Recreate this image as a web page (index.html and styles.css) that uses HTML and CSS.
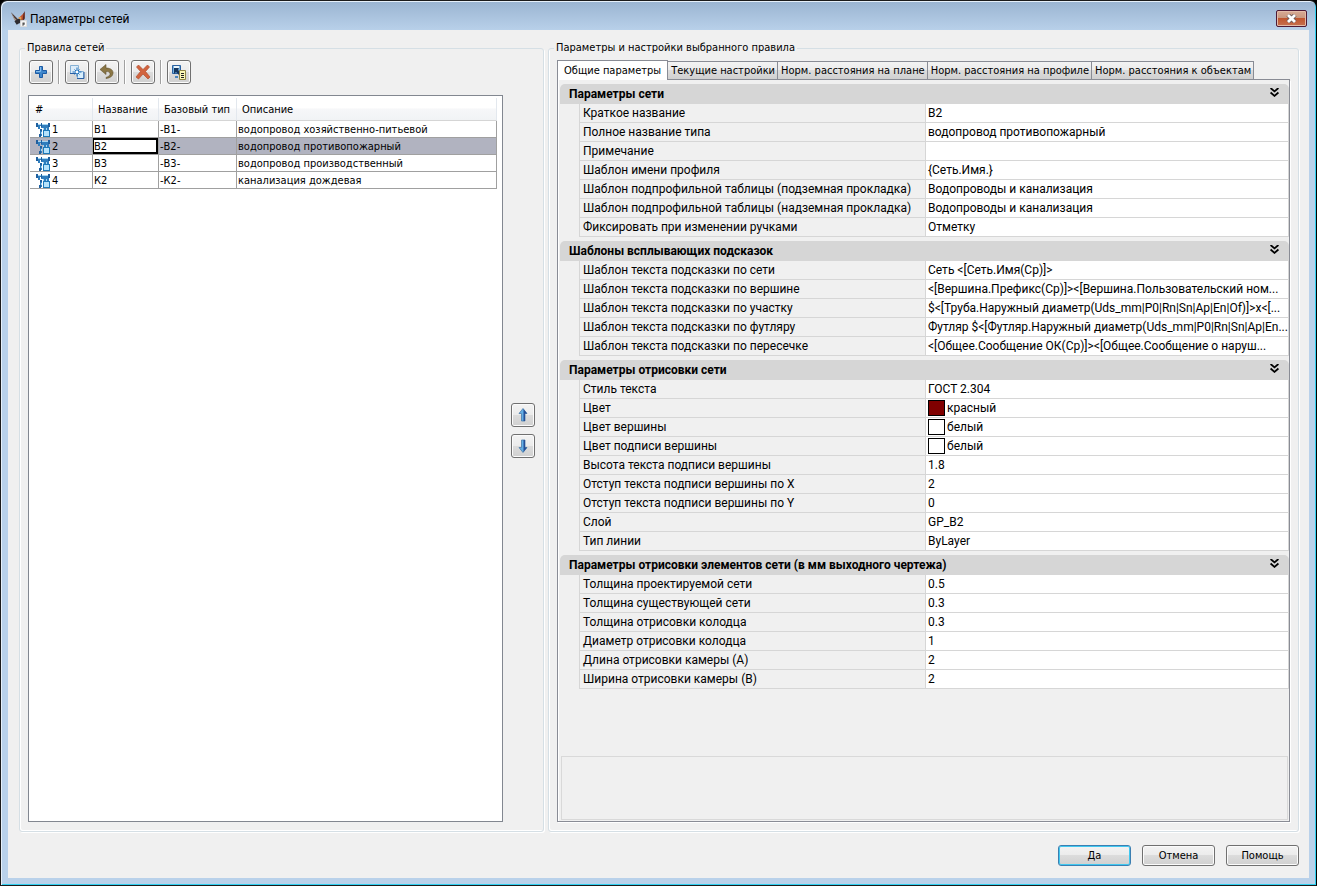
FILE: index.html
```html
<!DOCTYPE html>
<html lang="ru">
<head>
    <meta charset="UTF-8">
    <meta name="viewport" content="width=device-width, initial-scale=1.0">
    <title>Параметры сетей</title>
    <link rel="stylesheet" href="styles.css">
</head>
<body>
    <!-- Shared symbols -->
    <svg class="symbols" aria-hidden="true">
        <symbol id="net" viewBox="0 0 14 14">
            <path d="M0 2H13M5 4H12V7M3 3V6M5 7V13M9 4V8" stroke="#2f7dbd" stroke-width="2" fill="none"/>
            <path d="M0 0h2v4H0zM5 0h1v4H5zM12 0h2v4h-2zM4 6h2v2H4zM3 11h2v3H3z" fill="#1f5f9e"/>
            <path d="M2 1h3v1H2zM6 1h6v1H6zM7 5h1v2H7zM10 5h1v2h-1zM5 9h1v2H5z" fill="#a5d6f3"/>
            <rect x="7.5" y="7.5" width="6" height="6" fill="#b5e2fb" stroke="#1d79b9"/>
        </symbol>
        <symbol id="chevrons" viewBox="0 0 8 8">
            <path d="M0.500 0L4 3L7.500 0M0.500 4L4 7L7.500 4" stroke="#000" stroke-width="1.600" fill="none"/>
        </symbol>
    </svg>

    <div class="window">
        <header class="titlebar">
            <svg class="app-icon" width="16" height="16" viewBox="0 0 14 14">
                <path d="M0 1L6 7L8 11L4 9z" fill="#4b3a36"/>
                <path d="M0 1L3 6L6 9L3 8z" fill="#a8978b"/>
                <path d="M7 6L12 1V6L8 10z" fill="#c2502d"/>
                <path d="M11 2L12 0V7L10 9z" fill="#5b2b22"/>
                <path d="M3 9L8 6L10 9L5 12z" fill="#2e2c30"/>
                <path d="M6 6L9 5L9 8z" fill="#e2a352"/>
                <rect x="8.500" y="8.500" width="5" height="5" fill="#fff" stroke="#ddd"/>
                <path d="M10 10h2v2h-1v1h-1z" fill="#555"/>
            </svg>
            <h1>Параметры сетей</h1>
            <button class="close" type="button" aria-label="Закрыть">
                <svg width="11" height="9" viewBox="0 0 11 9">
                    <path d="M2 1L9 8M9 1L2 8" stroke="#6b5a5a" stroke-width="4.500"/>
                    <path d="M2 1L9 8M9 1L2 8" stroke="#fff" stroke-width="2.800"/>
                </svg>
            </button>
        </header>

        <main class="client">
            <div class="groups">
                <fieldset class="group">
                    <legend>Правила сетей</legend>
                    <div class="rules">
                        <div class="rules-main">
                            <div class="toolbar">
                                <button class="tool" type="button" aria-label="Добавить">
                                    <svg width="16" height="16" viewBox="0 0 16 16">
                                        <path d="M6.500 2.500h3v4h4v3h-4v4h-3v-4h-4v-3h4z" fill="#3f87cc" stroke="#1c5ba4"/>
                                        <path d="M7.500 3v4.500H3" stroke="#85bdec" fill="none"/>
                                    </svg>
                                </button>
                                <span class="sep"></span>
                                <button class="tool" type="button" aria-label="Копировать">
                                    <svg width="16" height="16" viewBox="0 0 16 16">
                                        <path d="M1.500 1.500h8v8h-8z" fill="#dcecf9" stroke="#86b1d5"/>
                                        <path d="M8.500 7.500h6v7h-6z" fill="#d8eefc" stroke="#86b1d5"/>
                                        <path d="M1 9.500h6M8 14.500h7V8" stroke="#2a5fa5" fill="none"/>
                                        <path d="M8 3.500v9M3.500 8h9M5.500 5.500l5 5M10.500 5.500l-5 5" stroke="#1f6fba"/>
                                        <rect x="7" y="7" width="2" height="2" fill="#fff"/>
                                    </svg>
                                </button>
                                <button class="tool" type="button" aria-label="Отменить">
                                    <svg width="16" height="16" viewBox="0 0 16 16">
                                        <path d="M1 5.500L7 0.500V4C12 4 14.500 6.500 14 9.500C13.500 12.500 11 14 7 14.500V13.500C10 12.500 11.500 11 11 9.500C10.500 7.800 9 7.500 7 7.500V10.500z" fill="#8a7645" stroke="#62532f" stroke-width="0.600"/>
                                    </svg>
                                </button>
                                <span class="sep"></span>
                                <button class="tool" type="button" aria-label="Удалить">
                                    <svg width="16" height="16" viewBox="0 0 16 16">
                                        <path d="M1.500 3L3.500 1L8 5.500L12.500 1L14.500 3L10.500 7.500L15 13L13 15L8 10L3.500 15L1 13L5.500 7.500z" fill="#d2643f" stroke="#b04f30" stroke-width="0.700"/>
                                    </svg>
                                </button>
                                <span class="sep"></span>
                                <button class="tool" type="button" aria-label="Импорт">
                                    <svg width="16" height="16" viewBox="0 0 16 16">
                                        <path d="M1.500 1.500h8v8h-8z" fill="#78b4e2" stroke="#2b61a0"/>
                                        <path d="M3 2h5v3H3z" fill="#e8f4fc"/>
                                        <path d="M3 4L8 4L7 6L11 10L9 12L5 8L3 10z" fill="#14365f"/>
                                        <path d="M4 12h3v2H4z" fill="#4a86bd"/>
                                        <path d="M8.500 6.500h6v9h-6z" fill="#fbf8b6" stroke="#8f8646"/>
                                        <path d="M10 9.500h3M10 11.500h3M10 13.500h3" stroke="#222"/>
                                    </svg>
                                </button>
                            </div>

                            <div class="list">
                                <table class="rules-table">
                                    <colgroup>
                                        <col class="col-num"><col class="col-name"><col class="col-type"><col>
                                    </colgroup>
                                    <thead>
                                        <tr><th>#</th><th>Название</th><th>Базовый тип</th><th>Описание</th></tr>
                                    </thead>
                                    <tbody>
                                        <tr>
                                            <td><svg class="net"><use href="#net"/></svg>1</td>
                                            <td>В1</td><td>-В1-</td><td>водопровод хозяйственно-питьевой</td>
                                        </tr>
                                        <tr class="selected">
                                            <td><svg class="net"><use href="#net"/></svg>2</td>
                                            <td class="editing"><input type="text" value="В2" aria-label="Название"></td>
                                            <td>-В2-</td><td>водопровод противопожарный</td>
                                        </tr>
                                        <tr>
                                            <td><svg class="net"><use href="#net"/></svg>3</td>
                                            <td>В3</td><td>-В3-</td><td>водопровод производственный</td>
                                        </tr>
                                        <tr>
                                            <td><svg class="net"><use href="#net"/></svg>4</td>
                                            <td>К2</td><td>-К2-</td><td>канализация дождевая</td>
                                        </tr>
                                    </tbody>
                                </table>
                            </div>
                        </div>

                        <div class="order">
                            <button class="tool" type="button" aria-label="Вверх">
                                <svg width="16" height="16" viewBox="0 0 16 16">
                                    <path d="M8 1.500L12 6.500H10V14H6.500V6.500H4z" fill="#62aee6" stroke="#4b7ba8" stroke-width="0.800"/>
                                    <path d="M8.500 2L12 6.500H10V14H8.500z" fill="#254f96"/>
                                </svg>
                            </button>
                            <button class="tool" type="button" aria-label="Вниз">
                                <svg width="16" height="16" viewBox="0 0 16 16">
                                    <path d="M8 14.500L12 9.500H10V2H6.500V9.500H4z" fill="#62aee6" stroke="#4b7ba8" stroke-width="0.800"/>
                                    <path d="M8.500 14L12 9.500H10V2H8.500z" fill="#254f96"/>
                                </svg>
                            </button>
                        </div>
                    </div>
                </fieldset>

                <fieldset class="group">
                    <legend>Параметры и настройки выбранного правила</legend>
                    <div class="settings">
                        <div class="tabs" role="tablist">
                            <button class="tab active" type="button" role="tab" aria-selected="true">Общие параметры</button>
                            <button class="tab" type="button" role="tab">Текущие настройки</button>
                            <button class="tab" type="button" role="tab">Норм. расстояния на плане</button>
                            <button class="tab" type="button" role="tab">Норм. расстояния на профиле</button>
                            <button class="tab" type="button" role="tab">Норм. расстояния к объектам</button>
                            <span class="tabs-rest"></span>
                        </div>

                        <div class="panel">
                            <section class="props">
                                <h2>Параметры сети <button type="button" aria-label="Свернуть"><svg><use href="#chevrons"/></svg></button></h2>
                                <table>
                                    <tr><th>Краткое название</th><td>В2</td></tr>
                                    <tr><th>Полное название типа</th><td>водопровод противопожарный</td></tr>
                                    <tr><th>Примечание</th><td></td></tr>
                                    <tr><th>Шаблон имени профиля</th><td>{Сеть.Имя.}</td></tr>
                                    <tr><th>Шаблон подпрофильной таблицы (подземная прокладка)</th><td>Водопроводы и канализация</td></tr>
                                    <tr><th>Шаблон подпрофильной таблицы (надземная прокладка)</th><td>Водопроводы и канализация</td></tr>
                                    <tr><th>Фиксировать при изменении ручками</th><td>Отметку</td></tr>
                                </table>
                            </section>

                            <section class="props">
                                <h2>Шаблоны всплывающих подсказок <button type="button" aria-label="Свернуть"><svg><use href="#chevrons"/></svg></button></h2>
                                <table>
                                    <tr><th>Шаблон текста подсказки по сети</th><td>Сеть &lt;[Сеть.Имя(Ср)]&gt;</td></tr>
                                    <tr><th>Шаблон текста подсказки по вершине</th><td>&lt;[Вершина.Префикс(Ср)]&gt;&lt;[Вершина.Пользовательский ном...</td></tr>
                                    <tr><th>Шаблон текста подсказки по участку</th><td>$&lt;[Труба.Наружный диаметр(Uds_mm|P0|Rn|Sn|Ap|En|Of)]&gt;x&lt;[...</td></tr>
                                    <tr><th>Шаблон текста подсказки по футляру</th><td>Футляр $&lt;[Футляр.Наружный диаметр(Uds_mm|P0|Rn|Sn|Ap|En...</td></tr>
                                    <tr><th>Шаблон текста подсказки по пересечке</th><td>&lt;[Общее.Сообщение ОК(Ср)]&gt;&lt;[Общее.Сообщение о наруш...</td></tr>
                                </table>
                            </section>

                            <section class="props">
                                <h2>Параметры отрисовки сети <button type="button" aria-label="Свернуть"><svg><use href="#chevrons"/></svg></button></h2>
                                <table>
                                    <tr><th>Стиль текста</th><td>ГОСТ 2.304</td></tr>
                                    <tr><th>Цвет</th><td><span class="swatch red"></span>красный</td></tr>
                                    <tr><th>Цвет вершины</th><td><span class="swatch"></span>белый</td></tr>
                                    <tr><th>Цвет подписи вершины</th><td><span class="swatch"></span>белый</td></tr>
                                    <tr><th>Высота текста подписи вершины</th><td>1.8</td></tr>
                                    <tr><th>Отступ текста подписи вершины по X</th><td>2</td></tr>
                                    <tr><th>Отступ текста подписи вершины по Y</th><td>0</td></tr>
                                    <tr><th>Слой</th><td>GP_В2</td></tr>
                                    <tr><th>Тип линии</th><td>ByLayer</td></tr>
                                </table>
                            </section>

                            <section class="props">
                                <h2>Параметры отрисовки элементов сети (в мм выходного чертежа) <button type="button" aria-label="Свернуть"><svg><use href="#chevrons"/></svg></button></h2>
                                <table>
                                    <tr><th>Толщина проектируемой сети</th><td>0.5</td></tr>
                                    <tr><th>Толщина существующей сети</th><td>0.3</td></tr>
                                    <tr><th>Толщина отрисовки колодца</th><td>0.3</td></tr>
                                    <tr><th>Диаметр отрисовки колодца</th><td>1</td></tr>
                                    <tr><th>Длина отрисовки камеры (А)</th><td>2</td></tr>
                                    <tr><th>Ширина отрисовки камеры (В)</th><td>2</td></tr>
                                </table>
                            </section>

                            <div class="hint"></div>
                        </div>
                    </div>
                </fieldset>
            </div>

            <footer class="actions">
                <button class="btn default" type="button">Да</button>
                <button class="btn" type="button">Отмена</button>
                <button class="btn" type="button">Помощь</button>
            </footer>
        </main>
    </div>
</body>
</html>
```

FILE: styles.css
```css
* {
    box-sizing: border-box;
}
body {
    margin: 0;
    background: #000;
    color: #000;
    font-family: "DejaVu Sans Condensed", "Noto Sans", sans-serif;
    font-size: 11px;
    line-height: 16px;
}
button,
input {
    font: inherit;
    color: inherit;
}
.symbols {
    display: none;
}

/* Window frame */
.window {
    display: flex;
    flex-direction: column;
    min-height: 100vh;
    padding: 0 7px 7px 6px;
    border: 1px solid #1b1b1b;
    border-right-color: #000;
    border-radius: 7px 7px 0 0;
    background: linear-gradient(#9ab4d1, #b9d1ea 30px, #b9d1ea);
    box-shadow: inset 1px 1px #e6f0fa, inset -1px -1px #2fd0f0;
}
.titlebar {
    display: flex;
    align-items: center;
    height: 29px;
    padding: 6px 2px 0 4px;
}
.app-icon {
    margin-right: 3px;
}
.titlebar h1 {
    flex: 1;
    margin: 0;
    font-family: Roboto, "Noto Sans", sans-serif;
    font-size: 12px;
    font-weight: normal;
}
.close {
    display: flex;
    align-items: center;
    justify-content: center;
    width: 31px;
    height: 17px;
    padding: 0;
    border: 1px solid #4e1a35;
    border-radius: 2px;
    background: linear-gradient(#d8ab94, #c99880 45%, #c0562f 50%, #c67150);
    box-shadow: inset 0 0 0 1px #e3bba8;
}

/* Client area */
.client {
    flex: 1;
    display: flex;
    flex-direction: column;
    margin-left: 1px;
    padding: 10px 10px 12px 11px;
    background: #f0f0f0;
}
.groups {
    flex: 1;
    display: grid;
    grid-template-columns: 525px 1fr;
    gap: 4px;
}
.group {
    display: flex;
    min-width: 0;
    margin: 0;
    padding: 4px 8px 9px;
    border: 1px solid #d5dfe5;
    border-radius: 3px;
    box-shadow: inset 1px -1px #fff, 1px 1px #fff;
}
.group legend {
    padding: 0 2px;
    margin-left: -3px;
}

/* Rules list */
.rules {
    flex: 1;
    display: flex;
    gap: 8px;
}
.rules-main {
    flex: 1;
    display: flex;
    flex-direction: column;
}
.toolbar {
    display: flex;
    gap: 6px;
    margin-bottom: 11px;
    padding-left: 1px;
}
.tool {
    display: flex;
    align-items: center;
    justify-content: center;
    width: 24px;
    height: 24px;
    padding: 0;
    border: 1px solid #707070;
    border-radius: 3px;
    background: linear-gradient(#f3f3f3, #ebebeb 50%, #dcdcdc 50%, #d0d0d0);
    box-shadow: inset 0 0 0 1px #fbfbfb;
}
.sep {
    width: 2px;
    margin: 0 -1px;
    border-left: 1px solid #a0a0a0;
    border-right: 1px solid #fff;
}
.list {
    flex: 1;
    padding: 2px 5px 0 1px;
    border: 1px solid #828790;
    background: #fff;
}
.rules-table {
    width: 100%;
    table-layout: fixed;
    border-collapse: separate;
    border-spacing: 0;
}
.col-num {
    width: 63px;
}
.col-name {
    width: 66px;
}
.col-type {
    width: 78px;
}
.rules-table th {
    height: 23px;
    padding: 2px 0 0 5px;
    border-right: 1px solid #e3e8ee;
    border-bottom: 1px solid #d5d5d5;
    background: linear-gradient(#fff 45%, #f6f7f9 50%, #f1f3f5);
    font-weight: normal;
    text-align: left;
}
.rules-table td {
    height: 17px;
    padding: 2px 0 0 1px;
    border-right: 1px solid #a0a0a0;
    border-bottom: 1px solid #a0a0a0;
    line-height: 14px;
    white-space: nowrap;
}
.rules-table td:first-child {
    padding-left: 6px;
}
.selected td {
    background: #b1b3c0;
}
.net {
    width: 14px;
    height: 14px;
    margin-right: 2px;
    vertical-align: top;
}
.rules-table .editing {
    padding: 0;
}
.editing input {
    display: block;
    width: 100%;
    height: 16px;
    padding: 1px 0 0;
    border: 2px solid #000;
    border-left-width: 1px;
    border-radius: 0;
    background: #fff;
    outline: none;
}
.order {
    display: flex;
    flex-direction: column;
    justify-content: center;
    gap: 7px;
    padding-bottom: 21px;
}

/* Tabs */
.settings {
    flex: 1;
    display: flex;
    flex-direction: column;
    min-width: 0;
}
.tabs {
    display: flex;
    align-items: flex-end;
    height: 20px;
}
.tab {
    height: 19px;
    padding: 1px 2px 0 3px;
    border: 1px solid #898c95;
    border-left-width: 0;
    background: linear-gradient(#f3f3f3, #ebebeb 50%, #dcdcdc 50%, #d0d0d0);
    white-space: nowrap;
}
.tab.active {
    height: 20px;
    padding: 0 6px;
    border-left-width: 1px;
    border-bottom: 0;
    background: #fff;
}
.tabs-rest {
    flex: 1;
    border-bottom: 1px solid #898c95;
}
.panel {
    flex: 1;
    display: flex;
    flex-direction: column;
    padding: 4px 0 1px 2px;
    border: 1px solid #898c95;
    border-top: 0;
    box-shadow: inset 1px 0 #fff, 1px 1px #fff;
}

/* Property grid */
.props {
    margin-bottom: 4px;
    font-family: Roboto, "Noto Sans", sans-serif;
    font-size: 12px;
}
.props h2 {
    display: flex;
    justify-content: space-between;
    height: 20px;
    margin: 0;
    padding: 0 10px 0 9px;
    border-radius: 5px 5px 0 0;
    background: #d6d6d6;
    font-size: 12px;
    line-height: 20px;
}
.props h2 button {
    display: flex;
    padding: 4px 0;
    border: 0;
    background: none;
}
.props h2 svg {
    width: 9px;
    height: 9px;
}
.props table {
    width: calc(100% - 19px);
    margin-left: 19px;
    table-layout: fixed;
    border-collapse: separate;
    border-spacing: 0;
    border-left: 1px solid #d6d6d6;
}
.props th,
.props td {
    height: 19px;
    padding: 0 2px 0 3px;
    border-right: 1px solid #d6d6d6;
    border-bottom: 1px solid #d6d6d6;
    font-weight: normal;
    line-height: 18px;
    text-align: left;
    white-space: nowrap;
    overflow: hidden;
}
.props th {
    width: 346px;
}
.props td {
    padding-left: 2px;
    padding-right: 0;
    background: #fff;
}
.swatch {
    display: inline-block;
    width: 17px;
    height: 16px;
    margin: 1px 2px 0 0;
    border: 1px solid #000;
    vertical-align: top;
}
.swatch.red {
    background: #800000;
}
.hint {
    height: 64px;
    margin: auto 1px 0;
    border: 1px solid #d9d9d9;
}

/* Dialog buttons */
.actions {
    display: flex;
    justify-content: flex-end;
    gap: 11px;
    padding-top: 13px;
}
.btn {
    width: 73px;
    height: 21px;
    padding: 1px 0 0;
    border: 1px solid #707070;
    border-radius: 3px;
    background: linear-gradient(#f3f3f3, #ebebeb 50%, #dcdcdc 50%, #d0d0d0);
    box-shadow: inset 0 0 0 1px #fbfbfb;
}
.btn.default {
    border-color: #3c7fb1;
    box-shadow: inset 0 0 0 1px #41c8f0;
}
```
